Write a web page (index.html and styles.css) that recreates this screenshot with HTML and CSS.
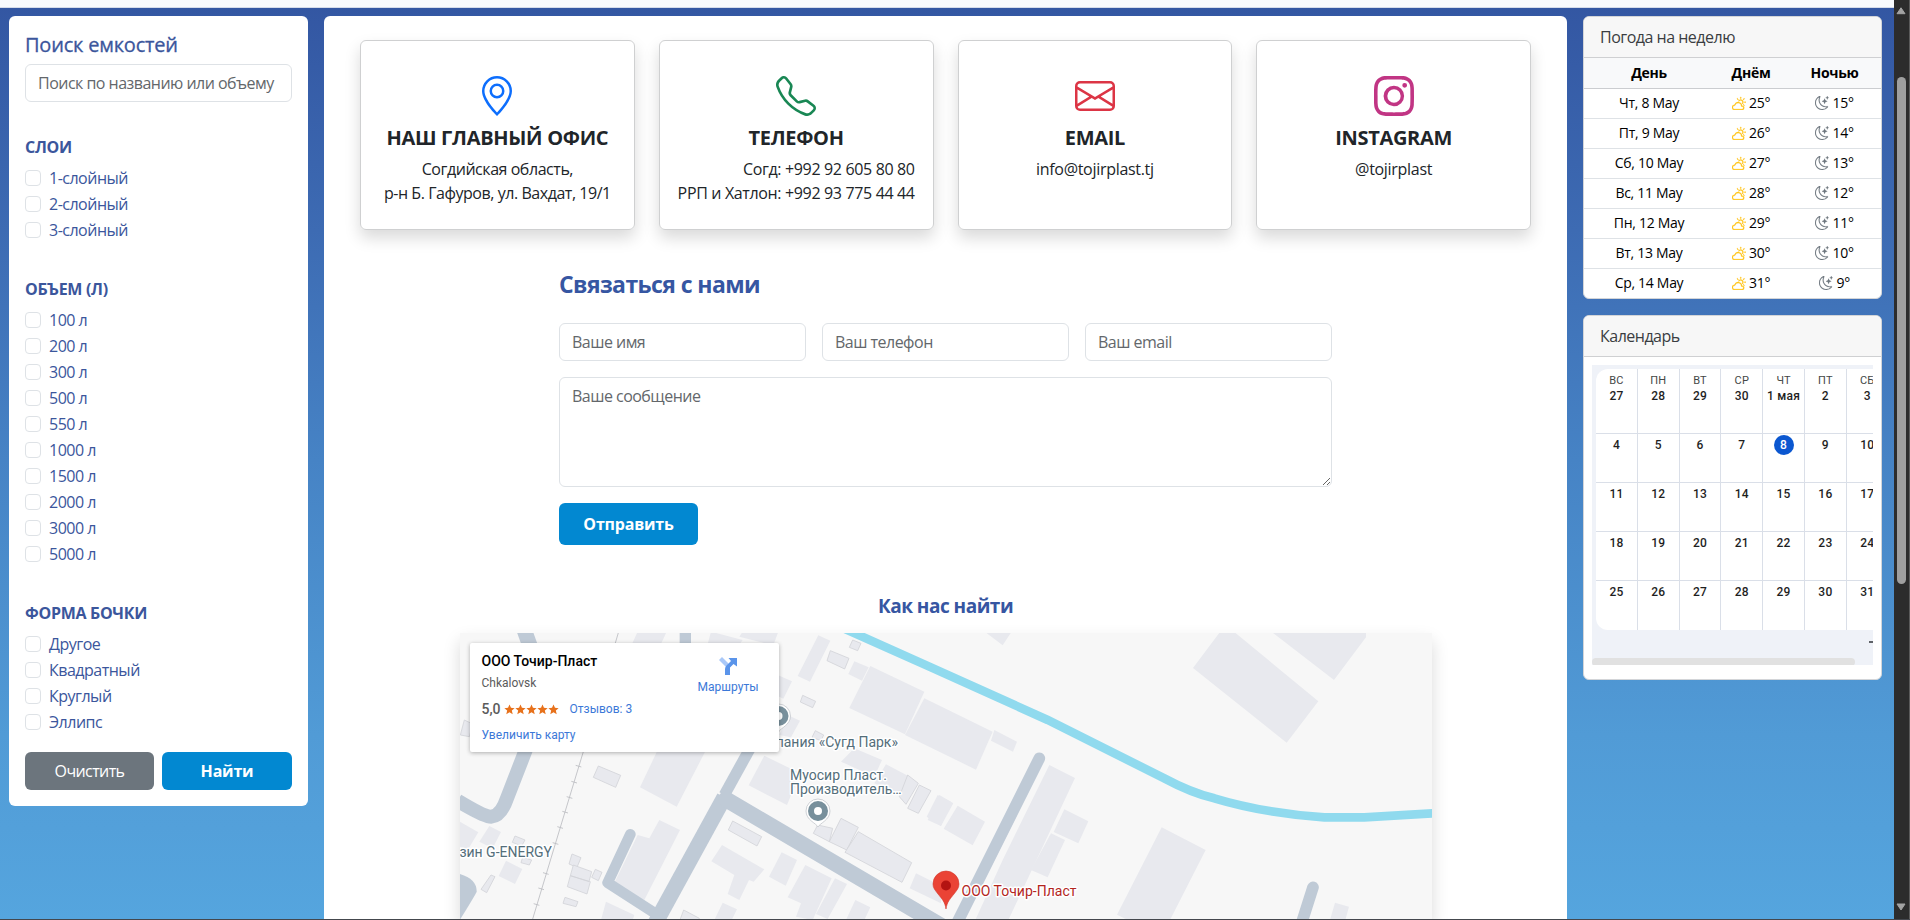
FILE: index.html
```html
<!DOCTYPE html>
<html lang="ru">
<head>
<meta charset="utf-8">
<title>Точир-Пласт — контакты</title>
<link rel="stylesheet" href="styles.css">
</head>
<body>
<svg class="sprite" aria-hidden="true">
  <symbol id="cloud-sun" viewBox="0 0 16 16"><path d="M7 8a3.5 3.5 0 0 1 3.5 3.555.5.5 0 0 0 .624.492A1.503 1.503 0 0 1 13 13.5a1.5 1.5 0 0 1-1.5 1.5H3a2 2 0 1 1 .1-3.998.5.5 0 0 0 .51-.375A3.5 3.5 0 0 1 7 8m4.473 3a4.5 4.5 0 0 0-8.72-.99A3 3 0 0 0 3 16h8.5a2.5 2.5 0 0 0 0-5z"/><path d="M10.5 1.5a.5.5 0 0 0-1 0v1a.5.5 0 0 0 1 0zm3.743 1.964a.5.5 0 1 0-.707-.707l-.708.707a.5.5 0 0 0 .708.708zm-7.779-.707a.5.5 0 0 0-.707.707l.707.708a.5.5 0 1 0 .708-.708zm1.734 3.374a2 2 0 1 1 3.296 2.198q.3.423.516.898a3 3 0 1 0-4.84-3.225q.529.017 1.028.129m4.484 4.074c.6.215 1.125.59 1.522 1.072a.5.5 0 0 0 .039-.742l-.707-.707a.5.5 0 0 0-.854.377M14.5 6.5a.5.5 0 0 0 0 1h1a.5.5 0 0 0 0-1z"/></symbol>
  <symbol id="moon-stars" viewBox="0 0 16 16"><path d="M6 .278a.77.77 0 0 1 .08.858 7.2 7.2 0 0 0-.878 3.46c0 4.021 3.278 7.277 7.318 7.277q.792-.001 1.533-.16a.79.79 0 0 1 .81.316.73.73 0 0 1-.031.893A8.35 8.35 0 0 1 8.344 16C3.734 16 0 12.286 0 7.71 0 4.266 2.114 1.312 5.124.06A.75.75 0 0 1 6 .278M4.858 1.311A7.27 7.27 0 0 0 1.025 7.71c0 4.02 3.279 7.276 7.319 7.276a7.32 7.32 0 0 0 5.205-2.162q-.506.063-1.029.063c-4.61 0-8.343-3.714-8.343-8.29 0-1.167.242-2.278.681-3.286"/><path d="M10.794 3.148a.217.217 0 0 1 .412 0l.387 1.162c.173.518.579.924 1.097 1.097l1.162.387a.217.217 0 0 1 0 .412l-1.162.387a1.73 1.73 0 0 0-1.097 1.097l-.387 1.162a.217.217 0 0 1-.412 0l-.387-1.162A1.73 1.73 0 0 0 9.31 6.593l-1.162-.387a.217.217 0 0 1 0-.412l1.162-.387a1.73 1.73 0 0 0 1.097-1.097zM13.863.099a.145.145 0 0 1 .274 0l.258.774c.115.346.386.617.732.732l.774.258a.145.145 0 0 1 0 .274l-.774.258a1.16 1.16 0 0 0-.732.732l-.258.774a.145.145 0 0 1-.274 0l-.258-.774a1.16 1.16 0 0 0-.732-.732l-.774-.258a.145.145 0 0 1 0-.274l.774-.258c.346-.115.617-.386.732-.732z"/></symbol>
  <symbol id="star" viewBox="0 0 24 24"><path d="M12 1l3.2 7.4 8 .7-6.100 5.300 1.900 7.900L12 18.100 5 22.300l1.900-7.900L.8 9.100l8-.7z"/></symbol>
</svg>

<div class="page">
  <div class="topbar"></div>
  <div class="columns">

    <aside class="panel filters">
      <h5 class="filters-title">Поиск емкостей</h5>
      <input class="field" type="text" placeholder="Поиск по названию или объему">

      <h6 class="group-title">СЛОИ</h6>
      <div class="checks">
        <label class="check"><span class="box"></span>1-слойный</label>
        <label class="check"><span class="box"></span>2-слойный</label>
        <label class="check"><span class="box"></span>3-слойный</label>
      </div>

      <h6 class="group-title">ОБЪЕМ (Л)</h6>
      <div class="checks">
        <label class="check"><span class="box"></span>100 л</label>
        <label class="check"><span class="box"></span>200 л</label>
        <label class="check"><span class="box"></span>300 л</label>
        <label class="check"><span class="box"></span>500 л</label>
        <label class="check"><span class="box"></span>550 л</label>
        <label class="check"><span class="box"></span>1000 л</label>
        <label class="check"><span class="box"></span>1500 л</label>
        <label class="check"><span class="box"></span>2000 л</label>
        <label class="check"><span class="box"></span>3000 л</label>
        <label class="check"><span class="box"></span>5000 л</label>
      </div>

      <h6 class="group-title">ФОРМА БОЧКИ</h6>
      <div class="checks">
        <label class="check"><span class="box"></span>Другое</label>
        <label class="check"><span class="box"></span>Квадратный</label>
        <label class="check"><span class="box"></span>Круглый</label>
        <label class="check"><span class="box"></span>Эллипс</label>
      </div>

      <div class="filter-actions">
        <button class="btn btn-gray">Очистить</button>
        <button class="btn btn-blue">Найти</button>
      </div>
    </aside>

    <main class="panel content">
      <div class="cards">
        <div class="contact">
          <svg class="contact-icon geo" viewBox="0 0 16 16"><path d="M12.166 8.94c-.524 1.062-1.234 2.12-1.96 3.07A32 32 0 0 1 8 14.58a32 32 0 0 1-2.206-2.57c-.726-.95-1.436-2.008-1.96-3.07C3.304 7.867 3 6.862 3 6a5 5 0 0 1 10 0c0 .862-.305 1.867-.834 2.94M8 16s6-5.686 6-10A6 6 0 0 0 2 6c0 4.314 6 10 6 10"/><path d="M8 8a2 2 0 1 1 0-4 2 2 0 0 1 0 4m0 1a3 3 0 1 0 0-6 3 3 0 0 0 0 6"/></svg>
          <h5 class="contact-title">НАШ ГЛАВНЫЙ ОФИС</h5>
          <p class="contact-text address">Согдийская область,<br>р-н Б. Гафуров, ул. Вахдат, 19/1</p>
        </div>
        <div class="contact">
          <svg class="contact-icon tel" viewBox="0 0 16 16"><path d="M3.654 1.328a.678.678 0 0 0-1.015-.063L1.605 2.3c-.483.484-.661 1.169-.45 1.77a17.6 17.6 0 0 0 4.168 6.608 17.6 17.6 0 0 0 6.608 4.168c.601.211 1.286.033 1.77-.45l1.034-1.034a.678.678 0 0 0-.063-1.015l-2.307-1.794a.68.68 0 0 0-.58-.122l-2.19.547a1.75 1.75 0 0 1-1.657-.459L5.482 8.062a1.75 1.75 0 0 1-.46-1.657l.548-2.19a.68.68 0 0 0-.122-.58zM1.884.511a1.745 1.745 0 0 1 2.612.163L6.29 2.98c.329.423.445.974.315 1.494l-.547 2.19a.68.68 0 0 0 .178.643l2.457 2.457a.68.68 0 0 0 .644.178l2.189-.547a1.75 1.75 0 0 1 1.494.315l2.306 1.794c.829.645.905 1.87.163 2.611l-1.034 1.034c-.74.74-1.846 1.065-2.877.702a18.6 18.6 0 0 1-7.01-4.42 18.6 18.6 0 0 1-4.42-7.009c-.362-1.03-.037-2.137.703-2.877z"/></svg>
          <h5 class="contact-title">ТЕЛЕФОН</h5>
          <p class="contact-text phones">Согд: +992 92 605 80 80<br>РРП и Хатлон: +992 93 775 44 44</p>
        </div>
        <div class="contact">
          <svg class="contact-icon mail" viewBox="0 0 16 16"><path d="M0 4a2 2 0 0 1 2-2h12a2 2 0 0 1 2 2v8a2 2 0 0 1-2 2H2a2 2 0 0 1-2-2zm2-1a1 1 0 0 0-1 1v.217l7 4.2 7-4.2V4a1 1 0 0 0-1-1zm13 2.383-4.708 2.825L15 11.105zm-.034 6.876-5.64-3.471L8 9.583l-1.326-.795-5.64 3.47A1 1 0 0 0 2 13h12a1 1 0 0 0 .966-.741M1 11.105l4.708-2.897L1 5.383z"/></svg>
          <h5 class="contact-title">EMAIL</h5>
          <p class="contact-text">info@tojirplast.tj</p>
        </div>
        <div class="contact">
          <svg class="contact-icon insta" viewBox="0 0 16 16"><path d="M8 0C5.829 0 5.556.01 4.703.048 3.85.088 3.269.222 2.76.42a3.9 3.9 0 0 0-1.417.923A3.9 3.9 0 0 0 .42 2.76C.222 3.268.087 3.85.048 4.7.01 5.555 0 5.827 0 8.001c0 2.172.01 2.444.048 3.297.04.852.174 1.433.372 1.942.205.526.478.972.923 1.417.444.445.89.719 1.416.923.51.198 1.09.333 1.942.372C5.555 15.99 5.827 16 8 16s2.444-.01 3.298-.048c.851-.04 1.434-.174 1.943-.372a3.9 3.9 0 0 0 1.416-.923c.445-.445.718-.891.923-1.417.197-.509.332-1.09.372-1.942C15.99 10.445 16 10.173 16 8s-.01-2.445-.048-3.299c-.04-.851-.175-1.433-.372-1.941a3.9 3.9 0 0 0-.923-1.417A3.9 3.9 0 0 0 13.24.42c-.51-.198-1.092-.333-1.943-.372C10.443.01 10.172 0 7.998 0zm-.717 1.442h.718c2.136 0 2.389.007 3.232.046.78.035 1.204.166 1.486.275.373.145.64.319.92.599s.453.546.598.92c.11.281.24.705.275 1.485.039.843.047 1.096.047 3.231s-.008 2.389-.047 3.232c-.035.78-.166 1.203-.275 1.485a2.5 2.5 0 0 1-.599.919c-.28.28-.546.453-.92.598-.28.11-.704.24-1.485.276-.843.038-1.096.047-3.232.047s-2.39-.009-3.233-.047c-.78-.036-1.203-.166-1.485-.276a2.5 2.5 0 0 1-.92-.598 2.5 2.5 0 0 1-.6-.92c-.109-.281-.24-.705-.275-1.485-.038-.843-.046-1.096-.046-3.233s.008-2.388.046-3.231c.036-.78.166-1.204.276-1.486.145-.373.319-.64.599-.92s.546-.453.92-.598c.282-.11.705-.24 1.485-.276.738-.034 1.024-.044 2.515-.045zm4.988 1.328a.96.96 0 1 0 0 1.92.96.96 0 0 0 0-1.92m-4.27 1.122a4.109 4.109 0 1 0 0 8.217 4.109 4.109 0 0 0 0-8.217m0 1.441a2.667 2.667 0 1 1 0 5.334 2.667 2.667 0 0 1 0-5.334"/></svg>
          <h5 class="contact-title">INSTAGRAM</h5>
          <p class="contact-text">@tojirplast</p>
        </div>
      </div>

      <form class="feedback">
        <h4 class="feedback-title">Связаться с нами</h4>
        <div class="feedback-row">
          <input class="field" type="text" placeholder="Ваше имя">
          <input class="field" type="text" placeholder="Ваш телефон">
          <input class="field" type="text" placeholder="Ваш email">
        </div>
        <textarea class="field message" placeholder="Ваше сообщение"></textarea>
        <button class="btn btn-blue send" type="button">Отправить</button>
      </form>

      <h5 class="map-title">Как нас найти</h5>
      <div class="map">
        <svg class="map-canvas" viewBox="459 633 972 287">
          <rect x="459" y="633" width="972" height="287" fill="#f7f7f7"/>
          <g transform="translate(440 620) scale(.33333)">
            <g class="building">
              <path d="M590 35L677 35 660 72 573 72zM810 35L905 60 890 80 800 72zM905 35L1012 35 997 76 895 50z"/>
              <path d="M1132 46L1168 62 1107 185 1070 168z"/>
              <path d="M1010 165L1053 184 1027 236 1010 228zM1040 285L1077 302 1050 352 1015 345z"/>
              <path d="M1240 124L1283 142 1263 182 1222 162z"/>
              <path d="M1288 138L1450 215 1392 343 1225 264z"/>
              <path d="M1450 235L1655 335 1605 449 1392 345z"/>
              <path d="M650 390L795 390 707 560 597 502z"/>
              <path d="M970 407L1077 460 1038 555 923 496z"/>
              <path d="M1240 385L1323 420 1300 470 1200 425zM1335 433L1402 468 1376 525 1300 490zM1490 525L1530 545 1500 618 1457 590z"/>
              <path d="M655 600L717 630 610 840 517 795 590 645 625 655z"/>
              <path d="M495 845L580 885 575 900 480 900z"/>
              <path d="M57 605L112 637 80 690 57 680zM145 618L180 636 155 685 115 665zM195 722L244 747 222 792 173 768z"/>
              <path d="M843 675L970 748 938 785 924 780 895 840 860 822 880 765 811 724z"/>
              <path d="M1022 697L1068 720 1034 797 984 770z"/>
              <path d="M1093 735L1172 775 1115 900 1065 890 1080 850 1040 832zM1182 775L1218 792 1160 897 1125 882z"/>
              <path d="M1243 840L1288 862 1270 900 1215 900zM845 848L888 868 872 900 820 900z"/>
              <path d="M1425 760L1500 797 1500 850 1406 805z"/>
            </g>
            <g class="building outlined">
              <path d="M1235 60L1260 70 1250 92 1225 82zM1168 92L1224 115 1211 147 1158 122zM1085 226L1124 244 1115 263 1078 246z"/>
              <path d="M1123 332L1148 345 1140 362 1113 352z"/>
              <path d="M472 438L539 466 524 502 457 472z"/>
              <path d="M875 603L962 650 948 678 862 630z"/>
              <path d="M1200 595L1252 622 1217 690 1165 665zM1130 615L1175 625 1165 665 1117 640z"/>
              <path d="M1252 635L1412 728 1383 787 1212 697z"/>
              <path d="M222 648L252 660 242 678 214 667zM150 765L162 770 137 818 120 808zM393 702L420 713 408 742 384 732z"/>
              <path d="M397 735L452 755 444 785 388 767zM388 767L448 785 438 822 379 800zM372 832L411 845 405 860 366 850zM463 748L483 757 472 782 452 772z"/>
              <path d="M728 870L775 895 770 905 715 905zM245 712L272 720 265 735 240 728zM1435 495L1470 512 1432 580 1400 565zM1400 465L1432 490 1395 553 1375 530zM70 300L95 312 85 350 58 345z"/>
            </g>
            <path class="rail" d="M533 35L427 395 358 622 275 897M404 436l17 5M391 484l17 5M377 530l17 5M364 574l17 5M349 620l17 5M335 668l17 5M306 758l17 5M292 804l17 5M278 851l17 5"/>
            <g class="road">
              <path d="M248 25L275 100" stroke-width="46"/>
              <path d="M733 30V80" stroke-width="34"/>
              <path d="M262 370L198 535Q180 588 150 590 130 590 50 542" stroke-width="42"/>
              <path d="M930 380L850 525" stroke-width="34"/>
              <path d="M850 532L640 915" stroke-width="47"/>
              <path d="M855 538L1520 929" stroke-width="48" stroke-linecap="round"/>
              <path d="M568 643L500 788 650 885" stroke-width="32" stroke-linecap="round" stroke-linejoin="round"/>
              <path d="M50 760Q108 775 107 815 100 830 50 910z" fill="#bfcad6" stroke="none"/>
            </g>
          </g>
          <g transform="translate(930 620) scale(.33333)">
            <g class="building">
              <path d="M165 38L240 38 215 76zM870 32L910 36 1162 244 1067 368 786 144zM1025 38L1305 38 1305 52 1209 180z"/>
              <path d="M190 330L258 365 246 395 180 362zM355 435L432 474 300 755 232 900 133 900 215 720z"/>
              <path d="M400 568L472 604 442 670 368 636zM360 640L402 660 350 772 300 750z"/>
              <path d="M692 622L824 690 717 900 590 900 558 884zM1212 848L1254 860 1243 900 1197 900z"/>
              <path d="M25 525L67 550 30 618-10 600zM80 557L162 605 125 676 38 626z"/>
            </g>
            <g class="road">
              <path d="M325 415L75 915" stroke-width="35" stroke-linecap="round"/>
              <path d="M1146 802L1110 915" stroke-width="35" stroke-linecap="round"/>
            </g>
            <path class="river" d="M-260 26L0 142 350 300 700 475Q780 518 850 535 1000 580 1180 592H1300L1510 580"/>
          </g>
          <g class="map-label">
            <text x="897" y="747" text-anchor="end">Компания «Сугд Парк»</text>
            <text x="789" y="780">Муосир Пласт.</text>
            <text x="789" y="794">Производитель…</text>
            <text x="551" y="857" text-anchor="end">зин G-ENERGY</text>
            <text class="accent" x="960.500" y="896">ООО Точир-Пласт</text>
          </g>
          <g id="poi">
            <path d="M817 827c-2-4-12-7-12-16a12 12 0 0 1 24 0c0 9-10 12-12 16z" fill="#fff" stroke="#c3c7cb" stroke-width=".8"/>
            <circle cx="817" cy="811" r="7" fill="none" stroke="#78909c" stroke-width="6"/>
          </g>
          <use href="#poi" x="-39.500" y="-95"/>
          <path d="M945 909c-1-7-4-10-8-15-3-4-5-6-5-10a13 13 0 0 1 26 0c0 4-2 6-5 10-4 5-7 8-8 15z" fill="#ea4335" stroke="#d2382c" stroke-width=".6"/>
          <circle cx="945" cy="885.500" r="5" fill="#b31412"/>
        </svg>
        <div class="place">
          <div class="place-info">
            <div class="place-name">ООО Точир-Пласт</div>
            <div class="place-city">Chkalovsk</div>
            <div class="place-rating">
              <span class="score">5,0</span>
              <span class="stars"><svg><use href="#star"/></svg><svg><use href="#star"/></svg><svg><use href="#star"/></svg><svg><use href="#star"/></svg><svg><use href="#star"/></svg></span>
              <a class="reviews">Отзывов: 3</a>
            </div>
            <a class="enlarge">Увеличить карту</a>
          </div>
          <div class="directions">
            <svg width="18" height="18" viewBox="0 0 18 18"><path d="M0 3L3 0l6.500 6.500L9 12z" fill="#a9c8f8"/><path d="M6 18v-6q0-2 1.500-3.500L12 4 9.500 1H18v8.500L14.500 7 11 10.500V18z" fill="#5a94ea"/></svg>
            <a>Маршруты</a>
          </div>
        </div>
      </div>
    </main>

    <aside class="side">
      <section class="widget">
        <div class="widget-head">Погода на неделю</div>
        <table class="weather">
          <thead><tr><th class="c-day">День</th><th class="c-am">Днём</th><th>Ночью</th></tr></thead>
          <tbody>
            <tr><td>Чт, 8 May</td><td><svg class="wi sun"><use href="#cloud-sun"/></svg> 25°</td><td><svg class="wi moon"><use href="#moon-stars"/></svg> 15°</td></tr>
            <tr><td>Пт, 9 May</td><td><svg class="wi sun"><use href="#cloud-sun"/></svg> 26°</td><td><svg class="wi moon"><use href="#moon-stars"/></svg> 14°</td></tr>
            <tr><td>Сб, 10 May</td><td><svg class="wi sun"><use href="#cloud-sun"/></svg> 27°</td><td><svg class="wi moon"><use href="#moon-stars"/></svg> 13°</td></tr>
            <tr><td>Вс, 11 May</td><td><svg class="wi sun"><use href="#cloud-sun"/></svg> 28°</td><td><svg class="wi moon"><use href="#moon-stars"/></svg> 12°</td></tr>
            <tr><td>Пн, 12 May</td><td><svg class="wi sun"><use href="#cloud-sun"/></svg> 29°</td><td><svg class="wi moon"><use href="#moon-stars"/></svg> 11°</td></tr>
            <tr><td>Вт, 13 May</td><td><svg class="wi sun"><use href="#cloud-sun"/></svg> 30°</td><td><svg class="wi moon"><use href="#moon-stars"/></svg> 10°</td></tr>
            <tr><td>Ср, 14 May</td><td><svg class="wi sun"><use href="#cloud-sun"/></svg> 31°</td><td><svg class="wi moon"><use href="#moon-stars"/></svg> 9°</td></tr>
          </tbody>
        </table>
      </section>

      <section class="widget calendar">
        <div class="widget-head">Календарь</div>
        <div class="cal-frame">
          <div class="cal-grid">
            <div class="day"><small>ВС</small>27</div><div class="day"><small>ПН</small>28</div><div class="day"><small>ВТ</small>29</div><div class="day"><small>СР</small>30</div><div class="day"><small>ЧТ</small>1 мая</div><div class="day"><small>ПТ</small>2</div><div class="day"><small>СБ</small>3</div>
            <div class="day">4</div><div class="day">5</div><div class="day">6</div><div class="day">7</div><div class="day"><span class="today">8</span></div><div class="day">9</div><div class="day">10</div>
            <div class="day">11</div><div class="day">12</div><div class="day">13</div><div class="day">14</div><div class="day">15</div><div class="day">16</div><div class="day">17</div>
            <div class="day">18</div><div class="day">19</div><div class="day">20</div><div class="day">21</div><div class="day">22</div><div class="day">23</div><div class="day">24</div>
            <div class="day">25</div><div class="day">26</div><div class="day">27</div><div class="day">28</div><div class="day">29</div><div class="day">30</div><div class="day">31</div>
          </div>
          <div class="cal-zoom"></div>
          <div class="cal-scroll"></div>
        </div>
      </section>
    </aside>
  </div>
</div>
<div class="scrollbar">
  <svg width="10" height="8" viewBox="0 0 10 8"><path d="M5 .800L9 6.700H1z" fill="#a3a3a3" stroke="#a3a3a3" stroke-linejoin="round"/></svg>
  <div class="thumb"></div>
  <svg class="down" width="10" height="8" viewBox="0 0 10 8"><path d="M5 7L9 1H1z" fill="#a3a3a3" stroke="#a3a3a3" stroke-linejoin="round"/></svg>
</div>
</body>
</html>
```
FILE: styles.css
```css
*, *::before, *::after { box-sizing: border-box; }

body {
  margin: 0;
  height: 920px;
  display: flex;
  overflow: hidden;
  font: 16px/24px "Open Sans", "Noto Sans", sans-serif;
  letter-spacing: -0.3px;
  color: #212529;
  border-bottom: 1px solid #44474d;
  background: #2c2c2c;
}
h4, h5, h6, p { margin: 0; }
.sprite { position: absolute; width: 0; height: 0; }

.page {
  width: 1894px;
  height: 919px;
  overflow: hidden;
  background: linear-gradient(#3356a2, #3d6bb3 25%, #4683c5 50%, #519bd6 80%, #55a5de);
}
.topbar { height: 8px; background: #f8fafd; border-bottom: 1px solid #d5dcea; }
.columns {
  display: grid;
  grid-template-columns: 299px 1243px 299px;
  column-gap: 16px;
  align-items: start;
  padding: 8px 0 0 9px;
}
.panel { background: #fff; border-radius: 6px; }

/* Filters */
.filters { padding: 17px 16px 16px; height: 790px; color: #3b569c; }
.filters-title { font-size: 20px; line-height: 24px; font-weight: 500; margin-bottom: 7px; letter-spacing: -0.2px; -webkit-text-stroke: 0.3px #3b569c; }
.field {
  display: block;
  width: 100%;
  height: 38px;
  padding: 6px 12px;
  border: 1px solid #dee2e6;
  border-radius: 6px;
  background: #fff;
  font: inherit;
  letter-spacing: -0.52px;
  color: #212529;
}
.field::placeholder { color: #63676b; opacity: 1; }
.group-title { margin: 36px 0 9px; font-size: 16px; line-height: 19px; font-weight: 700; }
.checks { display: grid; row-gap: 2px; padding-bottom: 2px; letter-spacing: -0.5px; }
.check { display: flex; gap: 8px; height: 24px; }
.box { width: 16px; height: 16px; margin-top: 4px; border: 1px solid #dee2e6; border-radius: 4px; }
.filter-actions { display: grid; grid-template-columns: 129px 130px; gap: 8px; margin-top: 16px; }
.btn { height: 38px; padding: 0; border: 0; border-radius: 6px; font: inherit; letter-spacing: -0.6px; color: #fff; }
.btn-gray { background: #6c757d; }
.btn-blue { background: #0288d1; font-weight: 700; letter-spacing: -0.2px; }

/* Contacts */
.content { height: 911px; padding: 24px 36px 0; border-radius: 6px 6px 0 0; }
.cards { display: grid; grid-template-columns: repeat(4, 1fr); gap: 24px; }
.contact {
  height: 190px;
  padding-top: 35px;
  display: flex;
  flex-direction: column;
  align-items: center;
  border: 1px solid #cfd0d1;
  border-radius: 6px;
  box-shadow: 0 8px 16px rgba(0, 0, 0, .15);
}
.contact-icon { width: 40px; height: 40px; fill: currentColor; }
.geo { color: #0d6efd; }
.tel { color: #198754; }
.mail { color: #dc3545; }
.insta { color: #c13584; }
.contact-title { margin: 10px 0 7px; font-size: 20px; line-height: 24px; font-weight: 700; }
.contact-text { text-align: center; }
.address { letter-spacing: -0.45px; }
.phones { text-align: right; letter-spacing: -0.35px; }

/* Feedback form */
.feedback { width: 773px; margin: 40px auto 0; }
.feedback-title { font-size: 23px; line-height: 29px; font-weight: 700; letter-spacing: -0.6px; color: #3656a2; margin-bottom: 24px; }
.feedback-row { display: grid; grid-template-columns: repeat(3, 1fr); gap: 16px; margin-bottom: 16px; }
.message { height: 110px; resize: vertical; margin-bottom: 16px; }
.send { display: block; width: 139px; height: 42px; }

/* Map */
.map-title { margin: 49px 0 15px; text-align: center; font-size: 19px; line-height: 24px; font-weight: 700; letter-spacing: -0.5px; color: #3656a2; }
.map { position: relative; width: 972px; height: 287px; margin: 0 auto; box-shadow: 0 8px 16px rgba(0, 0, 0, .15); font-family: Roboto, sans-serif; letter-spacing: 0; }
.map-canvas { display: block; width: 972px; height: 287px; }
.building { fill: #e8e9ee; }
.outlined { stroke: #d3d4d9; stroke-width: 2.500; }
.rail { fill: none; stroke: #bbbcc0; stroke-width: 2.500; }
.road { fill: none; stroke: #bfcad6; }
.river { fill: none; stroke: #90daee; stroke-width: 26; }
.map-label { font-size: 14px; fill: #546e7a; stroke: #fff; stroke-width: 3px; paint-order: stroke; stroke-linejoin: round; }
.accent { fill: #b3261e; }
.place {
  position: absolute;
  left: 10px;
  top: 10px;
  width: 309px;
  height: 109px;
  padding: 9px 20px 0 12px;
  display: flex;
  justify-content: space-between;
  background: #fff;
  border-radius: 2px;
  box-shadow: 0 1px 4px rgba(0, 0, 0, .3);
  font-size: 12px;
}
.place a { color: #3b78d8; }
.place-name { font-size: 14px; line-height: 18px; font-weight: 500; color: #000; }
.place-city { line-height: 14px; margin-top: 6px; color: #5b5b5b; }
.place-rating { display: flex; align-items: center; height: 16px; margin-top: 11px; color: #5b5b5b; }
.score { font-size: 14px; font-weight: 500; margin-right: 3px; }
.stars { display: flex; margin-right: 11px; }
.stars svg { width: 11px; height: 11px; fill: #e7711b; }
.enlarge { display: block; line-height: 14px; margin-top: 11px; }
.directions { display: flex; flex-direction: column; align-items: center; padding-top: 5px; line-height: 14px; gap: 5px; }

/* Side widgets */
.widget {
  background: #fff;
  border: 1px solid #d3d5d8;
  border-radius: 6px;
  overflow: hidden;
  margin-bottom: 16px;
  height: 283px;
}
.widget-head { height: 41px; padding: 8px 16px; line-height: 24px; letter-spacing: -0.5px; background: #f7f7f7; border-bottom: 1px solid #cfd0d2; color: #3a3d41; }
.weather { width: 100%; table-layout: fixed; border-collapse: collapse; font-size: 14px; line-height: 20px; color: #000; text-align: center; }
.weather th, .weather td { height: 30px; padding: 4px 0; border-bottom: 1px solid #dee2e6; }
.weather th { font-weight: 700; background: #f8f9fa; border-bottom-color: #cbcdd0; }
.c-day { width: 130px; }
.c-am { width: 74px; }
.wi { width: 14px; height: 14px; vertical-align: -2px; stroke-width: 0.35px; }
.sun { fill: #ffc107; stroke: #ffc107; }
.moon { fill: #6c757d; stroke: #6c757d; stroke-width: 0.15px; }

.calendar { height: 365px; }
.cal-frame { width: 281px; height: 300px; margin: 8px; padding: 4px 0 0 4px; overflow: hidden; background: #eff2f8; font: 500 12px/15px Roboto, sans-serif; letter-spacing: 0.2px; color: #1f1f1f; }
.cal-grid {
  display: grid;
  width: 293px;
  grid-template-columns: repeat(7, 41.800px);
  grid-template-rows: 65px repeat(4, 49px);
  background: #fff;
  border-radius: 12px 0 0 12px;
  overflow: hidden;
}
.day { display: flex; flex-direction: column; align-items: center; padding-top: 4px; border-right: 1px solid #dadfe8; border-bottom: 1px solid #dadfe8; white-space: nowrap; }
.day:nth-child(n+29) { border-bottom: 0; }
.day small { font-size: 11px; line-height: 16px; font-weight: 400; color: #444746; }
.today { width: 20px; height: 20px; margin-top: -3px; line-height: 20px; text-align: center; border-radius: 50%; background: #0b57d0; color: #fff; }
.cal-zoom { width: 8px; height: 2px; margin: 11px 0 0 273px; background: #5f6368; }
.cal-scroll { width: 263px; height: 8px; margin: 15px 0 0 -4px; border-radius: 4px; background: #e1e1e1; }

/* Browser scrollbar */
.scrollbar { width: 16px; height: 919px; display: flex; flex-direction: column; align-items: center; padding: 7px 1px 0 0; background: #2c2c2c; border-right: 1px solid #5b5b5b; }
.thumb { width: 9px; height: 507px; margin-top: 62px; border-radius: 5px; background: #9f9f9f; }
.down { margin-top: 319px; }
```
